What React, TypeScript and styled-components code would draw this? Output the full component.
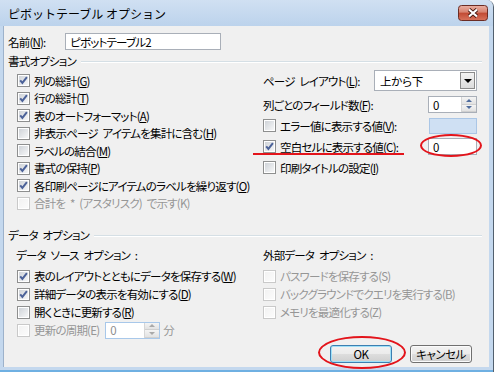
import React from "react";
import styled, { createGlobalStyle } from "styled-components";

const FONT = `"Noto Sans CJK JP", "Noto Sans", sans-serif`;

const Global = createGlobalStyle`
  html, body { margin: 0; padding: 0; background: #ffffff; }
  body { font-family: ${FONT}; }
`;

const Window = styled.div`
  width: 494px;
  height: 372px;
  box-sizing: border-box;
  display: flex;
  flex-direction: column;
  background: #c4d8ee;
  border-right: 1px solid #52606e;
  border-top-right-radius: 7px;
  overflow: hidden;
  font-family: ${FONT};
  font-size: 12px;
  color: #000;
`;

const TitleBar = styled.div`
  height: 26px;
  flex: none;
  display: flex;
  align-items: center;
  padding: 0 5px 0 8px;
  background: linear-gradient(#d0e0f2, #bcd3ec);
`;

const TitleText = styled.div`
  font-size: 12px;
  line-height: 14px;
  padding-top: 1px;
`;

const CloseWrap = styled.div`
  margin-left: auto;
  display: flex;
`;

const Body = styled.div`
  flex: 1;
  display: flex;
  padding: 0 4px 3px 3px;
  border-bottom: 2px solid #6fb0e2;
`;

const Content = styled.div`
  flex: 1;
  display: flex;
  flex-direction: column;
  background: #f0f0f0;
  border-left: 1px solid #9db2cb;
  padding: 7px 7px 0 4px;
  font-feature-settings: "palt";
  font-size: 11.5px;
  letter-spacing: -0.8px;
  word-spacing: 3px;
  line-height: 14px;
`;

const NameRow = styled.div`
  display: flex;
  align-items: center;
  height: 17px;
`;

const NameLabel = styled.div`
  width: 57px;
`;

const TextBox = styled.div<{ $w: number; $h?: number; $disabled?: boolean; $blank?: boolean }>`
  width: ${(p) => p.$w}px;
  height: ${(p) => p.$h ?? 17}px;
  box-sizing: border-box;
  border: 1px solid ${(p) => (p.$blank ? "#aac6e6" : "#a9afb8")};
  background: ${(p) => (p.$blank ? "#cfe0f3" : "#ffffff")};
  color: ${(p) => (p.$disabled ? "#8d8d8d" : "#000")};
  padding-left: 4px;
  display: flex;
  align-items: center;
`;

const SectionHeader = styled.div<{ $top: number }>`
  margin-top: ${(p) => p.$top}px;
  height: 14px;
  display: flex;
  align-items: center;
`;

const Rule = styled.div`
  flex: 1;
  margin: 2px 0 0 5px;
  border-top: 1px solid #d5dfe5;
  border-bottom: 1px solid #ffffff;
`;

const Columns = styled.div<{ $top: number; $h?: number }>`
  margin-top: ${(p) => p.$top}px;
  ${(p) => (p.$h ? `height: ${p.$h}px;` : "")}
  display: grid;
  grid-template-columns: 255px 1fr;
`;

const Column = styled.div<{ $pl: number; $pt?: number; $pr?: number }>`
  display: flex;
  flex-direction: column;
  padding-left: ${(p) => p.$pl}px;
  padding-top: ${(p) => p.$pt ?? 0}px;
  padding-right: ${(p) => p.$pr ?? 0}px;
`;

const CheckRow = styled.div<{ $h: number; $disabled?: boolean }>`
  height: ${(p) => p.$h}px;
  display: flex;
  align-items: center;
  gap: 4px;
  color: ${(p) => (p.$disabled ? "#969696" : "#000")};
  white-space: nowrap;
`;

const FieldRow = styled.div<{ $h: number; $mt?: number }>`
  position: relative;
  height: ${(p) => p.$h}px;
  margin-top: ${(p) => p.$mt ?? 0}px;
  display: flex;
  align-items: center;
  justify-content: space-between;
  white-space: nowrap;
`;

const SubHeader = styled.div<{ $ml?: number }>`
  height: 14px;
  margin-left: ${(p) => p.$ml ?? 0}px;
  margin-bottom: 5px;
`;

const BoxEl = styled.span<{ $disabled?: boolean }>`
  flex: none;
  width: 13px;
  height: 13px;
  box-sizing: border-box;
  padding: 1px;
  border: 1px solid ${(p) => (p.$disabled ? "#c9c9c9" : "#8e8f8f")};
  background: ${(p) =>
    p.$disabled
      ? "linear-gradient(135deg, #f2f2f2, #fbfbfb) content-box, #fff"
      : "linear-gradient(135deg, #cfd3d8, #f6f7f8) content-box, #fff"};
  display: flex;
  align-items: center;
  justify-content: center;
`;

const Box: React.FC<{ checked?: boolean; disabled?: boolean }> = ({ checked, disabled }) => (
  <BoxEl $disabled={disabled}>
    {checked && (
      <svg width="9" height="9" viewBox="0 0 9 9" style={{ display: "block" }}>
        <path d="M1.2 4.3 L3.4 6.9 L7.9 1.2" fill="none" stroke="#4c6299" strokeWidth="2" />
      </svg>
    )}
  </BoxEl>
);

const Check: React.FC<{ h: number; checked?: boolean; disabled?: boolean; children: React.ReactNode }> = ({
  h,
  checked,
  disabled,
  children,
}) => (
  <CheckRow $h={h} $disabled={disabled}>
    <Box checked={checked} disabled={disabled} />
    <span>{children}</span>
  </CheckRow>
);

const Select = styled.div`
  position: relative;
  width: 103px;
  height: 21px;
  box-sizing: border-box;
  border: 1px solid #a9afb8;
  background: #fff;
  display: flex;
  align-items: center;
  padding-left: 5px;
  letter-spacing: -0.3px;
`;

const SelectButton = styled.div`
  margin-left: auto;
  margin-right: 1px;
  width: 15px;
  height: 17px;
  box-sizing: border-box;
  border: 1px solid #8b8b8b;
  background: linear-gradient(#f3f3f3, #dcdcdc);
  display: flex;
  align-items: center;
  justify-content: center;
`;

const DownTri = styled.span`
  width: 0;
  height: 0;
  border-left: 4px solid transparent;
  border-right: 4px solid transparent;
  border-top: 4px solid #000;
`;

const Spin = styled.div<{ $w: number; $disabled?: boolean }>`
  width: ${(p) => p.$w}px;
  height: 17px;
  box-sizing: border-box;
  border: 1px solid ${(p) => (p.$disabled ? "#a8c8ea" : "#a9afb8")};
  background: #fff;
  display: flex;
  align-items: center;
  padding-left: 4px;
  color: ${(p) => (p.$disabled ? "#8d8d8d" : "#000")};
  letter-spacing: 0;
`;

const SpinButtons = styled.div`
  margin-left: auto;
  width: 14px;
  height: 15px;
  display: flex;
  flex-direction: column;
  border-left: 1px solid #d6d6d6;
`;

const SpinHalf = styled.div`
  flex: 1;
  background: linear-gradient(#f4f4f4, #e2e2e2);
  border-bottom: 1px solid #d0d0d0;
  display: flex;
  align-items: center;
  justify-content: center;
`;

const Tri = styled.span<{ $up?: boolean; $disabled?: boolean }>`
  width: 0;
  height: 0;
  border-left: 3px solid transparent;
  border-right: 3px solid transparent;
  ${(p) =>
    p.$up
      ? `border-bottom: 3px solid ${p.$disabled ? "#a9a9a9" : "#4f6c9d"};`
      : `border-top: 3px solid ${p.$disabled ? "#a9a9a9" : "#4f6c9d"};`}
`;

const SpinBox: React.FC<{ w: number; disabled?: boolean }> = ({ w, disabled }) => (
  <Spin $w={w} $disabled={disabled}>
    0
    <SpinButtons>
      <SpinHalf>
        <Tri $up $disabled={disabled} />
      </SpinHalf>
      <SpinHalf>
        <Tri $disabled={disabled} />
      </SpinHalf>
    </SpinButtons>
  </Spin>
);

const Anchor = styled.div`
  position: relative;
  display: flex;
`;

const RedEllipse = styled.div<{ $l: number; $t: number; $w: number; $h: number }>`
  position: absolute;
  left: ${(p) => p.$l}px;
  top: ${(p) => p.$t}px;
  width: ${(p) => p.$w}px;
  height: ${(p) => p.$h}px;
  box-sizing: border-box;
  border: 2px solid #e3141b;
  border-radius: 50%;
  pointer-events: none;
`;

const RedUnderline = styled.div`
  position: absolute;
  left: -10px;
  top: 17px;
  width: 151px;
  height: 2px;
  background: #e3141b;
`;

const RefreshRow = styled.div`
  height: 18px;
  display: flex;
  align-items: center;
  gap: 6px;
  color: #969696;
`;

const Unit = styled.span`
  margin-left: -3px;
  color: #969696;
`;

const ButtonRow = styled.div`
  margin-top: 6px;
  display: flex;
  justify-content: flex-end;
  gap: 18px;
  padding-right: 10px;
`;

const Button = styled.button<{ $default?: boolean }>`
  width: 62px;
  height: 18px;
  box-sizing: border-box;
  padding: 0;
  border: 1px solid ${(p) => (p.$default ? "#3c7fb1" : "#707070")};
  border-radius: 3px;
  background: linear-gradient(#f2f2f2 0%, #ebebeb 50%, #dddddd 51%, #cfcfcf 100%);
  box-shadow: inset 0 0 0 1px ${(p) => (p.$default ? "#9fe0f8" : "#fbfbfb")};
  font-family: ${FONT};
  font-size: 11.5px;
  letter-spacing: -0.5px;
  line-height: 14px;
  color: #000;
  font-feature-settings: "palt";
`;

const CloseButton = () => (
  <svg width="30" height="16" viewBox="0 0 30 16">
    <defs>
      <linearGradient id="closeGrad" x1="0" y1="0" x2="0" y2="1">
        <stop offset="0" stopColor="#eab1a5" />
        <stop offset="0.45" stopColor="#d7826f" />
        <stop offset="0.5" stopColor="#c14a33" />
        <stop offset="1" stopColor="#d8745d" />
      </linearGradient>
    </defs>
    <rect x="0.5" y="0.5" width="29" height="15" rx="3" fill="url(#closeGrad)" stroke="#6b2c24" />
    <path d="M11 4.5 L19 11.5 M19 4.5 L11 11.5" stroke="#45170f" strokeWidth="3.8" />
    <path d="M11 4.5 L19 11.5 M19 4.5 L11 11.5" stroke="#ffffff" strokeWidth="2.2" />
  </svg>
);

export default function App() {
  return (
    <>
      <Global />
      <Window>
        <TitleBar>
          <TitleText>ピボットテーブル オプション</TitleText>
          <CloseWrap>
            <CloseButton />
          </CloseWrap>
        </TitleBar>
        <Body>
          <Content>
            <NameRow>
              <NameLabel>
                名前(<u>N</u>):
              </NameLabel>
              <TextBox $w={156}>ピボットテーブル2</TextBox>
            </NameRow>

            <SectionHeader $top={4}>
              書式オプション
              <Rule />
            </SectionHeader>

            <Columns $top={2} $h={158}>
              <Column $pl={9} $pt={2}>
                <Check h={17.5} checked>
                  列の総計(<u>G</u>)
                </Check>
                <Check h={17.5} checked>
                  行の総計(<u>T</u>)
                </Check>
                <Check h={17.5} checked>
                  表のオートフォーマット(<u>A</u>)
                </Check>
                <Check h={17.5}>
                  非表示ページ アイテムを集計に含む(<u>H</u>)
                </Check>
                <Check h={17.5}>
                  ラベルの結合(<u>M</u>)
                </Check>
                <Check h={17.5} checked>
                  書式の保持(<u>P</u>)
                </Check>
                <Check h={17.5} checked>
                  各印刷ページにアイテムのラベルを繰り返す(<u>O</u>)
                </Check>
                <Check h={17.5} disabled>
                  合計を * (アスタリスク) で示す(K)
                </Check>
              </Column>
              <Column $pl={0} $pr={5}>
                <FieldRow $h={21}>
                  <span>
                    ページ レイアウト(<u>L</u>):
                  </span>
                  <Select>
                    上から下
                    <SelectButton>
                      <DownTri />
                    </SelectButton>
                  </Select>
                </FieldRow>
                <FieldRow $h={21} $mt={3}>
                  <span>
                    列ごとのフィールド数(<u>F</u>):
                  </span>
                  <SpinBox w={49} />
                </FieldRow>
                <FieldRow $h={21}>
                  <Check h={21}>
                    エラー値に表示する値(<u>V</u>):
                  </Check>
                  <TextBox $w={48} $h={16} $blank />
                </FieldRow>
                <FieldRow $h={21}>
                  <RedUnderline />
                  <Check h={21} checked>
                    空白セルに表示する値(<u>C</u>):
                  </Check>
                  <Anchor>
                    <TextBox $w={49}>0</TextBox>
                    <RedEllipse $l={-8} $t={-4} $w={62} $h={23} />
                  </Anchor>
                </FieldRow>
                <FieldRow $h={21}>
                  <Check h={21}>
                    印刷タイトルの設定(<u>I</u>)
                  </Check>
                </FieldRow>
              </Column>
            </Columns>

            <SectionHeader $top={0}>
              データ オプション
              <Rule />
            </SectionHeader>

            <Columns $top={6}>
              <Column $pl={9}>
                <SubHeader $ml={-1}>データ ソース オプション :</SubHeader>
                <Check h={18} checked>
                  表のレイアウトとともにデータを保存する(<u>W</u>)
                </Check>
                <Check h={18} checked>
                  詳細データの表示を有効にする(<u>D</u>)
                </Check>
                <Check h={18}>
                  開くときに更新する(<u>R</u>)
                </Check>
                <RefreshRow>
                  <Check h={18} disabled>
                    更新の周期(E)
                  </Check>
                  <SpinBox w={55} disabled />
                  <Unit>分</Unit>
                </RefreshRow>
              </Column>
              <Column $pl={0}>
                <SubHeader>外部データ オプション :</SubHeader>
                <Check h={18} disabled>
                  パスワードを保存する(S)
                </Check>
                <Check h={18} disabled>
                  バックグラウンドでクエリを実行する(B)
                </Check>
                <Check h={18} disabled>
                  メモリを最適化する(Z)
                </Check>
              </Column>
            </Columns>

            <ButtonRow>
              <Anchor>
                <Button $default>OK</Button>
                <RedEllipse $l={-12} $t={-9} $w={88} $h={33} />
              </Anchor>
              <Button>キャンセル</Button>
            </ButtonRow>
          </Content>
        </Body>
      </Window>
    </>
  );
}
